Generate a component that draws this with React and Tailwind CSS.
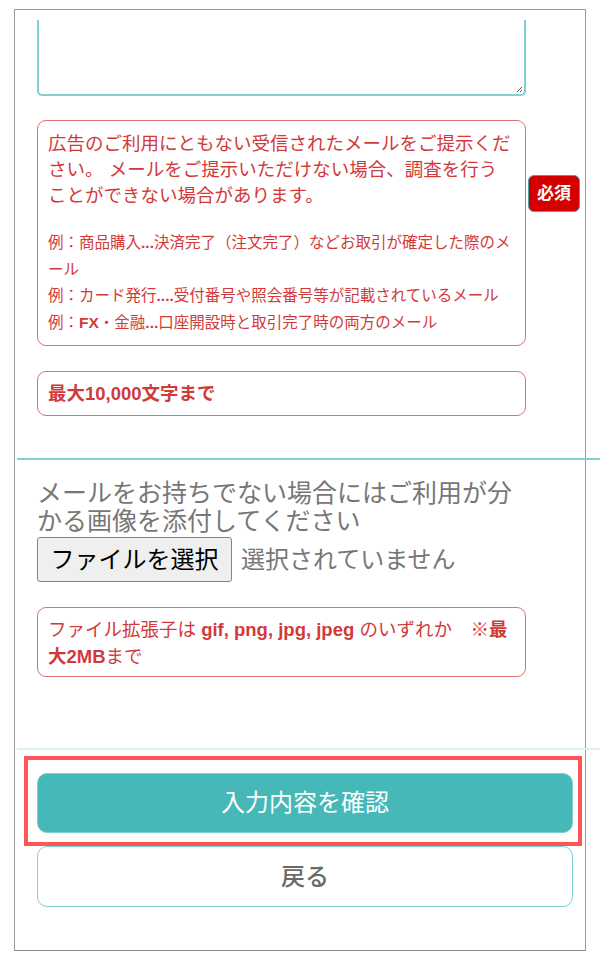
import React from 'react';

const jp = { fontFamily: '"Liberation Sans", "Noto Sans CJK JP", sans-serif' };

function RedBox({ className = '', children }) {
  return (
    <div className={`w-[489px] border border-[#e07070] rounded-[9px] text-[#d23a3a] ${className}`}>
      {children}
    </div>
  );
}

export default function App() {
  return (
    <div className="w-[600px] h-[960px] bg-white pt-[9px]" style={jp}>
      <div className="ml-[14px] w-[572px] h-[942px] border border-[#9a9a9a] border-b-[#8a8a8a]">
        {/* textarea, top scrolled out of view */}
        <div className="ml-[22px] mt-[10px] w-[489px] h-[76px] border-2 border-t-0 border-[#7fd0d0] rounded-b-[5px] relative">
          <svg className="absolute right-[1px] bottom-[1px]" width="7" height="7" viewBox="0 0 7 7">
            <path d="M6 1 L1 6 M6 4 L4 6" stroke="#555" strokeWidth="1" />
          </svg>
        </div>

        {/* notice + required badge */}
        <div className="ml-[22px] mt-[24px] flex items-start">
          <RedBox className="h-[226px] pl-[10px] pr-[8px] pt-[10px]">
            <p className="text-[18.5px] leading-[26px] whitespace-nowrap">
              広告のご利用にともない受信されたメールをご提示くだ<br />
              さい。 メールをご提示いただけない場合、調査を行う<br />
              ことができない場合があります。
            </p>
            <p className="mt-[21px] text-[15.5px] leading-[26.7px] whitespace-nowrap">
              例：商品購入<b>...</b>決済完了（注文完了）などお取引が確定した際のメ<br />
              ール<br />
              例：カード発行<b>....</b>受付番号や照会番号等が記載されているメール<br />
              例：<b>FX</b>・金融<b>...</b>口座開設時と取引完了時の両方のメール
            </p>
          </RedBox>
          <div className="ml-[2px] mt-[55px] w-[52px] h-[37px] bg-[#d40000] border border-[#4aa5a5] rounded-[6px] flex items-center justify-center text-white font-semibold text-[17px]">
            必須
          </div>
        </div>

        <RedBox className="ml-[22px] mt-[25px] h-[45px] pl-[10px] flex items-center">
          <span className="font-bold text-[18.5px]">最大10,000文字まで</span>
        </RedBox>

        <div className="ml-[2px] mt-[42px] w-[584px] h-[2px] bg-[#7fd0d0]" />

        <p className="ml-[22px] mt-[19px] text-[25px] leading-[28px] text-[#777777] whitespace-nowrap">
          メールをお持ちでない場合にはご利用が分<br />
          かる画像を添付してください
        </p>

        <div className="ml-[22px] mt-[2px] flex items-center">
          <div className="w-[195px] h-[45px] bg-[#efefef] border border-[#858585] rounded-[3px] flex items-center justify-center text-[24px] text-black">
            ファイルを選択
          </div>
          <span className="ml-[9px] text-[24px] text-[#777777]">選択されていません</span>
        </div>

        <RedBox className="ml-[22px] mt-[25px] h-[70px] pl-[10px] pt-[8px]">
          <p className="text-[18.5px] leading-[27px] whitespace-nowrap">
            ファイル拡張子は <b>gif, png, jpg, jpeg</b> のいずれか　<b>※最</b><br />
            <b>大2MB</b>まで
          </p>
        </RedBox>

        <div className="ml-[2px] mt-[71px] w-[584px] h-[2px] bg-[#dff0f0]" />

        <div className="ml-[9px] mt-[6px] w-[558px] border-[4px] border-[#ff5555] pt-[13px] pb-[9px] pl-[9px]">
          <div className="w-[536px] h-[60px] bg-[#46b8b8] border border-[#7acfcf] rounded-[10px] flex items-center justify-center text-white text-[24px]">
            入力内容を確認
          </div>
        </div>

        <div className="ml-[22px] w-[536px] h-[61px] border border-[#7fd0d0] rounded-[10px] flex items-center justify-center text-[#6a6a6a] text-[24px] font-medium">
          戻る
        </div>
      </div>
    </div>
  );
}
